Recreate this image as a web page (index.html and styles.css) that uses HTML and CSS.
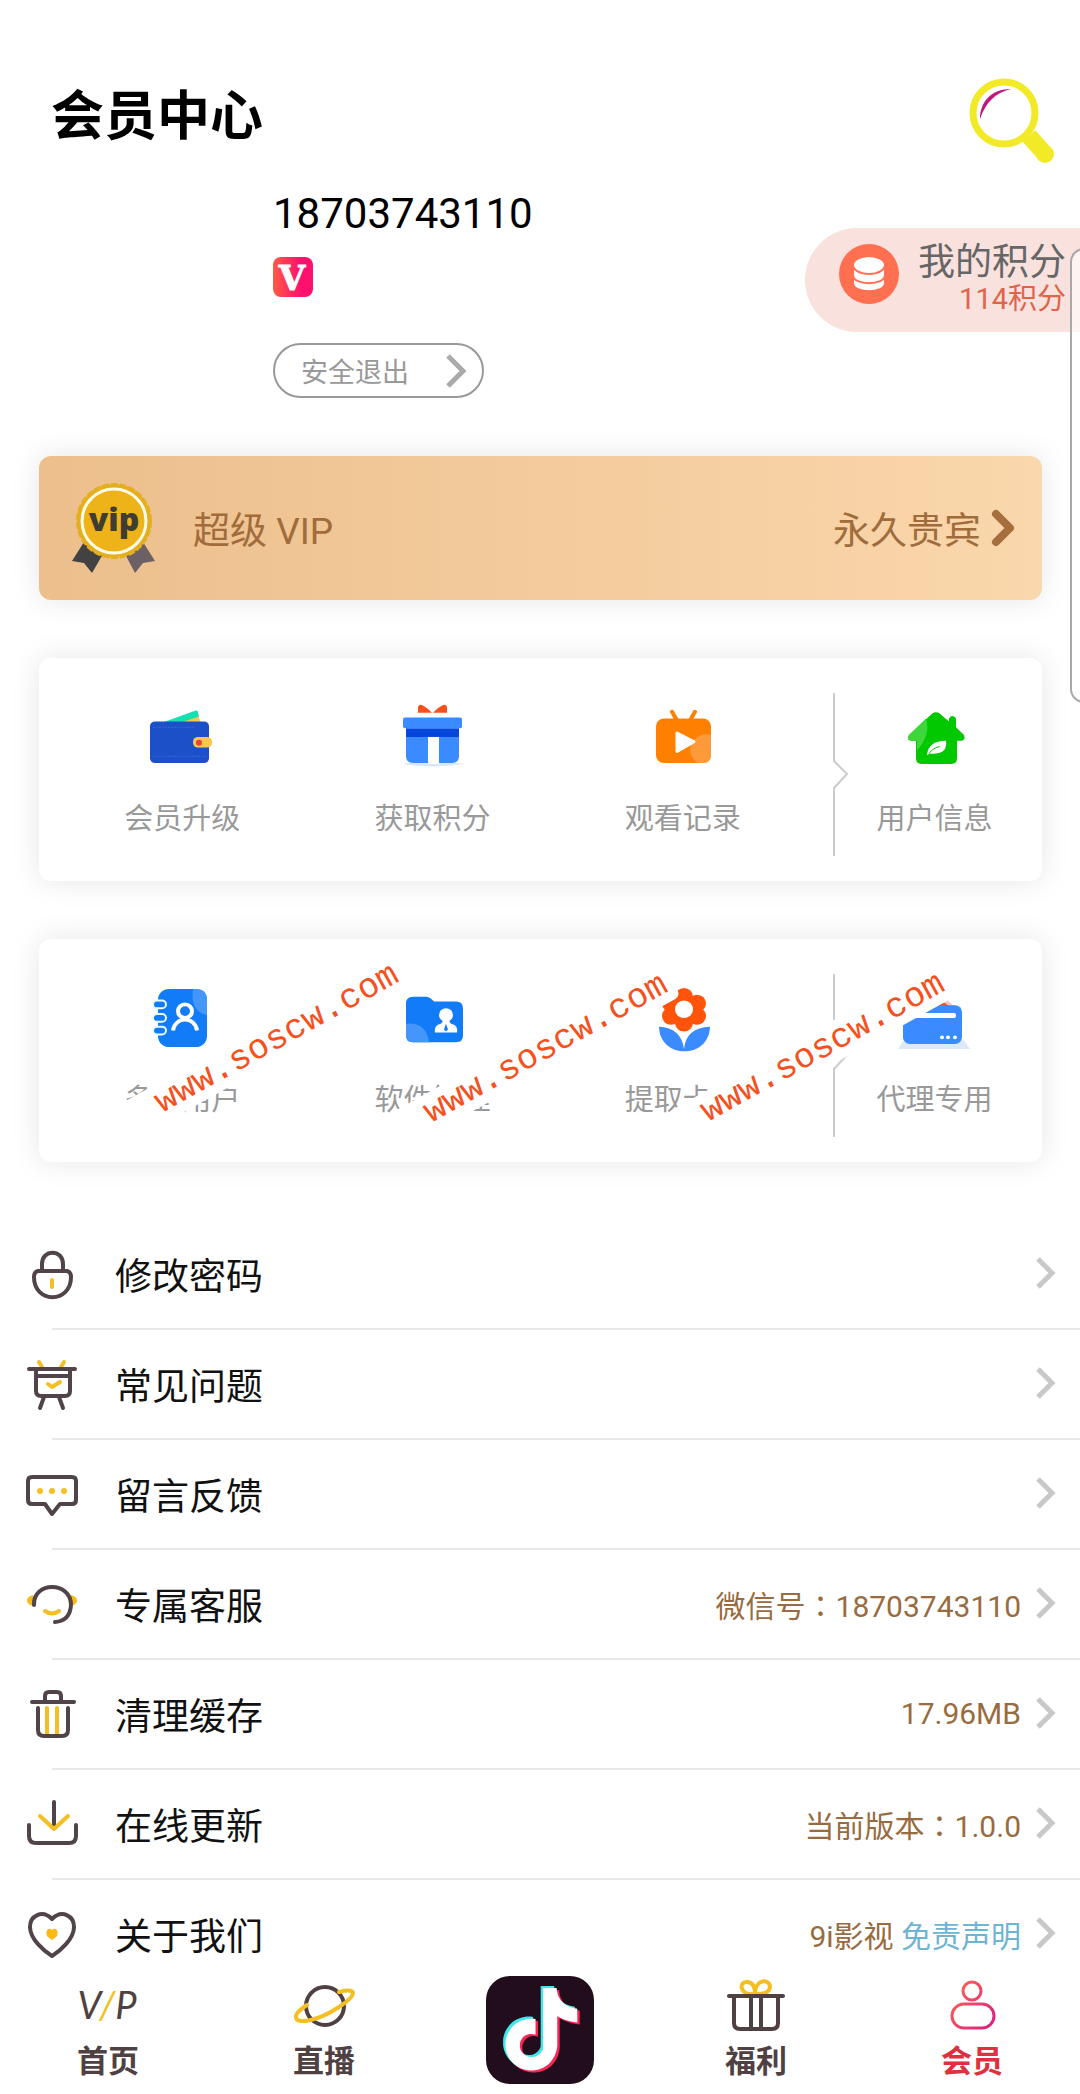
FILE: index.html
```html
<!DOCTYPE html>
<html lang="zh">
<head>
    <meta charset="UTF-8">
    <meta name="viewport" content="width=device-width, initial-scale=1.0">
    <title>会员中心</title>
    <link rel="stylesheet" href="styles.css">
</head>
<body>
    <div class="main-body">
        <div class="content">
            <header class="head-body">
                <h1>会员中心</h1>
                <button class="search-btn" type="button" aria-label="搜索">
                    <svg width="90" height="90" viewBox="0 0 90 90">
                        <path d="M66 64L83 83" stroke="#f2ea26" stroke-width="17" fill="none"/>
                        <circle cx="82" cy="82" r="9" fill="#f2ea26"/>
                        <circle cx="41" cy="41" r="31" stroke="#f2ea26" stroke-width="7" fill="#fff"/>
                        <path d="M17 47C17 30 28 17 48 17C32 21 23 30 17 47Z" fill="#c2187c"/>
                    </svg>
                </button>
            </header>

            <section class="profile">
                <div class="profile-info">
                    <div class="phone">18703743110</div>
                    <svg class="badge" width="40" height="40" viewBox="0 0 40 40">
                        <defs>
                            <linearGradient id="badgeBg"><stop offset="0" stop-color="#ff5a45"/><stop offset="0.7" stop-color="#ff0f6e"/></linearGradient>
                        </defs>
                        <rect width="40" height="40" rx="8" fill="url(#badgeBg)"/>
                        <text class="badge-text" x="19" y="33" text-anchor="middle">V</text>
                    </svg>
                    <button class="logout-btn" type="button">
                        <span>安全退出</span>
                        <svg width="20" height="34" viewBox="0 0 20 34"><path d="M2 2L17 17L2 32" stroke="#aaa" stroke-width="5" fill="none"/></svg>
                    </button>
                </div>
                <a class="points" href="#points">
                    <svg width="60" height="60" viewBox="0 0 60 60">
                        <circle cx="30" cy="30" r="30" fill="#ff7050"/>
                        <g fill="#fff" stroke="#ff7050" stroke-width="2">
                            <path d="M14 32V39C14 50 46 50 46 39V32Z"/>
                            <path d="M14 24V31C14 42 46 42 46 31V24Z"/>
                            <ellipse cx="30" cy="21" rx="16" ry="9"/>
                        </g>
                    </svg>
                    <div class="points-text">
                        <div class="points-title">我的积分</div>
                        <div class="points-num">114积分</div>
                    </div>
                </a>
            </section>

            <a class="vip-card" href="#vip">
                <svg width="84" height="90" viewBox="0 0 84 90">
                    <path d="M12 59L0 78L12 80L20 90L31 71Z" fill="#434242"/>
                    <path d="M71 59L83 78L71 80L63 90L53 71Z" fill="#6c6065"/>
                    <circle cx="42" cy="38" r="37" fill="#e3af1e"/>
                    <circle cx="42" cy="38" r="37" fill="none" stroke="#e3af1e" stroke-width="2" stroke-dasharray="7 2"/>
                    <circle cx="42" cy="38" r="32" fill="#efb31a" stroke="#fffbe6" stroke-width="3"/>
                    <text class="medal-text" x="42" y="48" text-anchor="middle">vip</text>
                </svg>
                <span class="vip-name">超级 VIP</span>
                <span class="vip-level">永久贵宾</span>
                <svg width="24" height="38" viewBox="0 0 24 38"><path d="M5 5L19 19L5 33" stroke="#a66d3d" stroke-width="8" stroke-linecap="round" stroke-linejoin="round" fill="none"/></svg>
            </a>

            <section class="tile-card">
                <a class="tile" href="#upgrade">
                    <svg class="tile-icon" viewBox="0 0 64 64" preserveAspectRatio="none">
                        <path d="M24 20L48 11L51 20Z" fill="#f8c74d"/>
                        <path d="M10 20L45 7Q48 6 48 9L49 13L28 20Z" fill="#16e0b0"/>
                        <rect y="18" width="59" height="43" rx="5" fill="#1c50c8"/>
                        <path d="M3 24H45M3 54H56" stroke="#3767d3" stroke-dasharray="2 1"/>
                        <rect x="43" y="34" width="19" height="11" rx="5" fill="#f8c74d"/>
                        <circle cx="49" cy="40" r="3" fill="#ee3f3a"/>
                    </svg>
                    <span>会员升级</span>
                </a>
                <a class="tile" href="#earn">
                    <svg class="tile-icon" viewBox="0 0 64 64" preserveAspectRatio="none">
                        <path d="M1 62Q32 57 64 62Q32 67 1 62Z" fill="#d6e8fb"/>
                        <path d="M18 9V3Q19 0 22 1Q28 4 32 9ZM47 9V3Q46 0 43 1Q37 4 33 9Z" fill="#f6501c"/>
                        <path d="M6 30H59V54Q59 61 52 61H13Q6 61 6 54Z" fill="#3a8bff"/>
                        <path d="M6 25H59V34H6Z" fill="#0546dc"/>
                        <rect x="3" y="14" width="59" height="11" rx="2" fill="#3a8bff"/>
                        <path d="M28 34H39V62H28Z" fill="#fff"/>
                    </svg>
                    <span>获取积分</span>
                </a>
                <a class="tile" href="#history">
                    <svg class="tile-icon" viewBox="0 0 64 64" preserveAspectRatio="none">
                        <path d="M21 8L26 17M44 8L39 17" stroke="#ff8000" stroke-width="4" stroke-linecap="round"/>
                        <rect x="5" y="15" width="55" height="46" rx="8" fill="#ff8000"/>
                        <path d="M60 32A16 16 0 0 0 47 61H52Q60 61 60 53Z" fill="#ff9a3a"/>
                        <path d="M26 30V49L43 39Z" fill="#fff" stroke="#fff" stroke-width="3" stroke-linejoin="round"/>
                    </svg>
                    <span>观看记录</span>
                </a>
                <svg class="tile-divider" width="35" height="163" viewBox="0 0 35 163"><path d="M26 0V68L39 81L26 95V163" stroke="#ccc" stroke-width="2" fill="none"/></svg>
                <a class="tile" href="#user">
                    <svg class="tile-icon" viewBox="0 0 64 64" preserveAspectRatio="none">
                        <path d="M30 10Q34 7 38 10L47 18V15Q50 10 54 15V24L62 32Q64 37 59 38H55V56Q55 62 49 62H20Q14 62 14 56V38H9Q4 37 7 32Z" fill="#02c800"/>
                        <path d="M24 15Q29 32 15 48V38H9Q4 37 7 32Z" fill="#3dd73c"/>
                        <path d="M25 53Q26 38 44 38Q46 53 28 51Z" fill="#fff"/>
                        <path d="M27 51Q31 45 38 44" stroke="#02c800" fill="none"/>
                    </svg>
                    <span>用户信息</span>
                </a>
            </section>

            <section class="tile-card">
                <a class="tile" href="#users">
                    <svg class="tile-icon" viewBox="0 0 64 64" preserveAspectRatio="none">
                        <rect x="8" y="4" width="49" height="60" rx="11" fill="#127cf8"/>
                        <path d="M43 4H46Q57 4 57 15V31Q40 27 43 4Z" fill="#4596fa"/>
                        <g fill="#127cf8" stroke="#eaffff" stroke-width="2">
                            <rect x="3" y="16" width="13" height="8" rx="4"/>
                            <rect x="3" y="30" width="13" height="8" rx="4"/>
                            <rect x="3" y="43" width="13" height="8" rx="4"/>
                        </g>
                        <g fill="none" stroke="#fff" stroke-width="4">
                            <circle cx="35" cy="27" r="7"/>
                            <path d="M23 47C25 32 45 32 47 47"/>
                        </g>
                    </svg>
                    <span>多级用户</span>
                </a>
                <a class="tile" href="#software">
                    <svg class="tile-icon" viewBox="0 0 64 64" preserveAspectRatio="none">
                        <path d="M6 19Q6 12 13 12H26Q30 12 34 17H56Q63 17 63 24V52Q63 59 56 59H13Q6 59 6 52Z" fill="#127cf8"/>
                        <path d="M6 40Q26 38 29 59H13Q6 59 6 52Z" fill="#4596fa"/>
                        <circle cx="46" cy="31" r="7" fill="#fff"/>
                        <path d="M43 35H49Q49 40 54 41Q58 43 57 49H35Q34 43 38 41Q43 40 43 35Z" fill="#fff"/>
                        <path d="M46 40L48 46L46 48L44 46Z" fill="#127cf8"/>
                    </svg>
                    <span>软件管理</span>
                </a>
                <a class="tile" href="#cards">
                    <svg class="tile-icon" viewBox="0 0 64 64" preserveAspectRatio="none">
                        <g fill="#ff540a">
                            <circle cx="33" cy="12" r="9"/><circle cx="46" cy="19" r="9"/><circle cx="46" cy="32" r="9"/>
                            <circle cx="33" cy="39" r="9"/><circle cx="20" cy="32" r="9"/><circle cx="20" cy="19" r="9"/>
                            <circle cx="33" cy="25" r="14"/>
                        </g>
                        <circle cx="33" cy="25" r="9" fill="#fff"/>
                        <path d="M8 43Q30 44 33 66Q35 44 59 43C58 77 9 77 8 43Z" fill="#3a8bff"/>
                    </svg>
                    <span>提取卡密</span>
                </a>
                <svg class="tile-divider" width="35" height="163" viewBox="0 0 35 163"><path d="M26 0V68L39 81L26 95V163" stroke="#ccc" stroke-width="2" fill="none"/></svg>
                <a class="tile" href="#agent">
                    <svg class="tile-icon" viewBox="0 0 64 64" preserveAspectRatio="none">
                        <path d="M2 57H62L68 66H-4Z" fill="#dce9fb"/>
                        <path d="M10 24L42 12L54 24Z" fill="#ffc4b8"/>
                        <path d="M20 24L38 15L50 24Z" fill="#f6501c"/>
                        <rect x="1" y="21" width="59" height="40" rx="7" fill="#3a8bff"/>
                        <rect x="6" y="29" width="48" height="5" rx="2" fill="#fff"/>
                        <g fill="#fff"><circle cx="40" cy="54" r="2"/><circle cx="46" cy="54" r="2"/><circle cx="53" cy="54" r="2"/></g>
                    </svg>
                    <span>代理专用</span>
                </a>
                <div class="stamp stamp-1">www.soscw.com</div>
                <div class="stamp stamp-2">www.soscw.com</div>
                <div class="stamp stamp-3">www.soscw.com</div>
            </section>

            <nav class="list-body">
                <a class="list-item" href="#password">
                    <svg class="list-icon" viewBox="0 0 50 50">
                        <path d="M15 21V14C15 -1 36 -1 36 14V21M11 21H40Q44 22 44 27C44 54 7 54 7 27Q7 22 11 21Z"/>
                        <path class="gold" d="M25 30V37"/>
                    </svg>
                    <div class="list-main"><span>修改密码</span><svg class="arrow" viewBox="0 0 20 32"><path d="M2 2L16 16L2 30"/></svg></div>
                </a>
                <a class="list-item" href="#faq">
                    <svg class="list-icon" viewBox="0 0 50 50">
                        <path class="gold" d="M12 2L15 7M37 2L34 7"/>
                        <path d="M2 9H48M9 9V31Q9 36 14 36H38Q43 36 43 31V9M9 16H43M17 37L13 48M32 37L36 48"/>
                        <path class="gold" d="M21 24L25 27L33 22"/>
                    </svg>
                    <div class="list-main"><span>常见问题</span><svg class="arrow" viewBox="0 0 20 32"><path d="M2 2L16 16L2 30"/></svg></div>
                </a>
                <a class="list-item" href="#feedback">
                    <svg class="list-icon" viewBox="0 0 50 50">
                        <path d="M5 7H45Q49 7 49 11V30Q49 34 45 34H33L25 44L18 34H5Q1 34 1 30V11Q1 7 5 7Z"/>
                        <path class="gold dots" d="M13 21V21M25 21V21M37 21V21"/>
                    </svg>
                    <div class="list-main"><span>留言反馈</span><svg class="arrow" viewBox="0 0 20 32"><path d="M2 2L16 16L2 30"/></svg></div>
                </a>
                <a class="list-item" href="#service">
                    <svg class="list-icon" viewBox="0 0 50 50">
                        <path class="gold-fill" d="M6 15C-2 17 -2 24 6 26ZM44 15C52 17 52 24 44 26Z"/>
                        <path d="M7 25C6 1 44 1 44 25Q43 41 28 42"/>
                        <path class="gold" d="M18 31Q25 36 32 31"/>
                    </svg>
                    <div class="list-main"><span>专属客服</span><span class="value">微信号<span class="colon" lang="zh-TW">：</span>18703743110</span><svg class="arrow" viewBox="0 0 20 32"><path d="M2 2L16 16L2 30"/></svg></div>
                </a>
                <a class="list-item" href="#cache">
                    <svg class="list-icon" viewBox="0 0 50 50">
                        <path class="gold" d="M20 18V45M30 18V45"/>
                        <path d="M5 12H47M18 11V6Q18 2 22 2H30Q34 2 34 6V11M11 18V40Q11 46 17 46H35Q41 46 41 40V18"/>
                    </svg>
                    <div class="list-main"><span>清理缓存</span><span class="value">17.96MB</span><svg class="arrow" viewBox="0 0 20 32"><path d="M2 2L16 16L2 30"/></svg></div>
                </a>
                <a class="list-item" href="#update">
                    <svg class="list-icon" viewBox="0 0 50 50">
                        <path d="M27 2V26M2 25V36Q2 43 9 43H42Q49 43 49 36V25"/>
                        <path class="gold" d="M13 16L27 29L41 16"/>
                    </svg>
                    <div class="list-main"><span>在线更新</span><span class="value">当前版本<span class="colon" lang="zh-TW">：</span>1.0.0</span><svg class="arrow" viewBox="0 0 20 32"><path d="M2 2L16 16L2 30"/></svg></div>
                </a>
                <a class="list-item" href="#about">
                    <svg class="list-icon" viewBox="0 0 50 50">
                        <path d="M25 9C15 -1 3 6 3 17C3 29 17 41 25 46C33 41 47 29 47 17C47 6 35 -1 25 9Z"/>
                        <path class="gold-fill" d="M25 20C21 16 17 23 21 27L25 30L29 27C33 23 29 16 25 20Z"/>
                    </svg>
                    <div class="list-main"><span>关于我们</span><span class="value">9i影视 <em>免责声明</em></span><svg class="arrow" viewBox="0 0 20 32"><path d="M2 2L16 16L2 30"/></svg></div>
                </a>
            </nav>
        </div>

        <nav class="tab-bar">
            <a class="tab" href="#home">
                <svg class="tab-icon" viewBox="0 0 60 60">
                    <text class="tab-vip" x="29" y="43" text-anchor="middle">V<tspan class="tab-vip-gold">/</tspan>P</text>
                </svg>
                <span>首页</span>
            </a>
            <a class="tab" href="#live">
                <svg class="tab-icon" viewBox="0 0 60 60">
                    <circle cx="31" cy="30" r="19"/>
                    <path class="gold" d="M45 16C65 11 62 20 45 31C24 45 2 49 2 41Q1 37 13 29"/>
                </svg>
                <span>直播</span>
            </a>
            <a class="tab tab-center" href="#video" aria-label="短视频">
                <svg width="108" height="108" viewBox="0 0 108 108">
                    <defs>
                        <path id="note" d="M12.5 0H16.4C16.5 1.6 17.1 3.1 18.2 4.2C19.3 5.3 20.9 5.8 22.4 6V10C21 9.9 19.5 9.6 18.2 9Q17.4 8.6 16.6 8.1V16.8C16.5 18.2 16 19.6 15.2 20.7C13.9 22.7 11.6 23.9 9.3 23.9C7.9 24 6.5 23.6 5.2 22.9C3.2 21.7 1.8 19.5 1.6 17.2V15.7C1.7 13.8 2.7 12 4.1 10.7C5.8 9.3 8.1 8.6 10.3 9V13.5C9.3 13.2 8.1 13.2 7.3 13.8C6.6 14.2 6.2 14.9 5.9 15.6C5.7 16.1 5.8 16.7 5.8 17.2C6 18.8 7.6 20.2 9.3 20C10.4 20 11.5 19.4 12.1 18.4Q12.4 18 12.5 17.4Z"/>
                    </defs>
                    <rect width="108" height="108" rx="24" fill="#210d1c"/>
                    <g transform="translate(14 12) scale(3.45)">
                        <use href="#note" x="0.7" y="0.6" fill="#fb2457"/>
                        <use href="#note" x="-0.7" y="-0.6" fill="#3fe6ea"/>
                        <use href="#note" fill="#fff"/>
                    </g>
                </svg>
            </a>
            <a class="tab" href="#welfare">
                <svg class="tab-icon" viewBox="0 0 60 60">
                    <path class="gold" d="M29 18C14 20 12 6 21 6Q29 6 29 18C29 2 44 3 44 11Q43 19 29 18"/>
                    <path d="M3 20H57M8 21V47Q8 53 14 53H46Q52 53 52 47V21M25 21V53M35 21V53"/>
                </svg>
                <span>福利</span>
            </a>
            <a class="tab active" href="#member">
                <svg class="tab-icon" viewBox="0 0 60 60">
                    <defs>
                        <linearGradient id="memberLine" gradientUnits="userSpaceOnUse" x1="8" y1="10" x2="52" y2="40"><stop offset="0" stop-color="#ff6a50"/><stop offset="1" stop-color="#e0257e"/></linearGradient>
                    </defs>
                    <g stroke="url(#memberLine)" stroke-width="3">
                        <circle cx="30" cy="15" r="9"/>
                        <rect x="10" y="28" width="42" height="24" rx="12"/>
                    </g>
                </svg>
                <span>会员</span>
            </a>
        </nav>
        <div class="edge-panel"></div>
    </div>
</body>
</html>
```
FILE: styles.css
```css
* {
    box-sizing: border-box;
}
body {
    margin: 0;
    background: #fff;
    font-family: Roboto, "Noto Sans CJK SC", sans-serif;
    font-weight: 400;
    color: #111;
}
a {
    color: inherit;
    text-decoration: none;
}
button {
    padding: 0;
    border: none;
    background: none;
    font-family: inherit;
    cursor: pointer;
}
svg {
    display: block;
    flex-shrink: 0;
    overflow: visible;
}
.main-body {
    position: relative;
    height: 100vh;
    display: flex;
    flex-direction: column;
    overflow: hidden;
}
.content {
    flex: 1;
    min-height: 0;
    overflow-x: hidden;
    overflow-y: auto;
    scrollbar-width: none;
}

/* 头部 */
.head-body {
    display: flex;
    align-items: center;
    justify-content: space-between;
    padding: 72px 27px 0 51px;
}
.head-body h1 {
    margin: 0;
    font-size: 53px;
    line-height: 80px;
    font-weight: 700;
    color: #000;
}
.profile {
    display: flex;
    align-items: flex-start;
    justify-content: space-between;
    padding: 27px 0 0 273px;
}
.phone {
    font-size: 42px;
    line-height: 50px;
    color: #000;
}
.badge {
    margin-top: 18px;
}
.badge-text {
    font: 700 34px "DejaVu Serif", serif;
    fill: #fff;
    stroke: #fff;
}
.logout-btn {
    display: flex;
    align-items: center;
    gap: 37px;
    height: 55px;
    margin-top: 46px;
    padding: 0 16px 0 26px;
    border: 2px solid #999;
    border-radius: 28px;
    font-size: 27px;
    color: #999;
}
.points {
    display: flex;
    gap: 19px;
    height: 104px;
    margin-top: 39px;
    padding: 15px 14px 0 34px;
    border-radius: 52px 0 0 52px;
    background: #f9e1dd;
    text-align: right;
}
.points svg {
    margin-top: 1px;
}
.points-title {
    font-size: 37px;
    line-height: 40px;
    color: #666;
}
.points-num {
    font-size: 29px;
    line-height: 32px;
    color: #e0644a;
}

/* 会员卡 */
.vip-card {
    display: flex;
    align-items: center;
    height: 144px;
    margin: 58px 38px 0 39px;
    padding: 0 27px 0 33px;
    border-radius: 12px;
    background: linear-gradient(90deg, #ecbf8c, #fad7ac);
    box-shadow: 0 0 30px rgba(0, 0, 0, 0.1);
    font-size: 37px;
    color: #a06c3c;
}
.medal-text {
    font: 800 32px "Open Sans", sans-serif;
    fill: #3f3c32;
}
.vip-name {
    margin-left: 37px;
}
.vip-level {
    margin: 0 10px 0 auto;
}

/* 功能卡片 */
.tile-card {
    position: relative;
    display: grid;
    grid-template-columns: 250fr 250fr 250fr 35px 183fr;
    margin: 58px 38px 0 39px;
    padding: 0 16px 0 18px;
    border-radius: 12px;
    background: #fff;
    box-shadow: 0 0 30px rgba(0, 0, 0, 0.1);
}
.tile {
    display: flex;
    flex-direction: column;
    align-items: center;
    gap: 33px;
    padding: 46px 0 42px;
    font-size: 29px;
    line-height: 40px;
    color: #999;
    white-space: nowrap;
}
.tile-icon {
    width: 64px;
    height: 62px;
}
.tile-divider {
    margin-top: 35px;
}
.stamp {
    position: absolute;
    width: 312px;
    height: 38px;
    padding-left: 32px;
    border-radius: 6px;
    background: #fff;
    font-family: "Liberation Mono", monospace;
    font-size: 35px;
    line-height: 38px;
    color: #f4511e;
    transform: rotate(-29deg);
}
.stamp-1 {
    left: 71px;
    top: 87px;
}
.stamp-2 {
    left: 340px;
    top: 97px;
}
.stamp-3 {
    left: 617px;
    top: 96px;
}

/* 列表 */
.list-body {
    margin-top: 58px;
}
.list-item {
    position: relative;
    display: flex;
    align-items: center;
    gap: 38px;
    height: 110px;
    padding-left: 27px;
    font-size: 37px;
}
.list-item::after {
    content: "";
    position: absolute;
    left: 52px;
    right: 0;
    bottom: 0;
    height: 2px;
    background: #e8e8e8;
}
.list-icon {
    width: 50px;
    height: 50px;
    fill: none;
    stroke: #51434a;
    stroke-width: 4;
    stroke-linecap: round;
    stroke-linejoin: round;
}
.gold {
    stroke: #f3bf22;
}
.dots {
    stroke-width: 6;
}
.gold-fill {
    fill: #fcb813;
    stroke: none;
}
.list-main {
    flex: 1;
    display: flex;
    align-items: center;
    padding: 0 24px 3px 0;
}
.value {
    margin-left: auto;
    font-size: 30px;
    color: #986b40;
}
.value em {
    font-style: normal;
    color: #6db5d3;
}
.colon {
    font-family: "Noto Sans CJK TC", sans-serif;
}
.arrow {
    width: 20px;
    height: 32px;
    margin-left: auto;
    margin-bottom: 2px;
    fill: none;
    stroke: #c8c8c8;
    stroke-width: 5;
}
.value + .arrow {
    margin-left: 15px;
}

/* 底部导航 */
.tab-bar {
    display: grid;
    grid-template-columns: repeat(5, 1fr);
    height: 129px;
    background: #fff;
}
.tab {
    display: flex;
    flex-direction: column;
    align-items: center;
    gap: 6px;
    padding-top: 11px;
    font-size: 31px;
    line-height: 40px;
    font-weight: 700;
    color: #4f4042;
}
.tab-icon {
    width: 60px;
    height: 60px;
    fill: none;
    stroke: #4f4042;
    stroke-width: 4;
    stroke-linecap: round;
    stroke-linejoin: round;
}
.tab-icon .gold {
    stroke: #f3bf22;
}
.tab-vip {
    font: italic 400 38px Lato, sans-serif;
    fill: #4f4042;
    stroke: none;
}
.tab-vip-gold {
    fill: #f3bf22;
}
.tab.active {
    color: #e0303f;
}

/* 右侧边栏把手 */
.edge-panel {
    position: absolute;
    top: 248px;
    right: -20px;
    width: 30px;
    height: 455px;
    border: 2px solid #a8a8a8;
    border-radius: 14px;
    background: rgba(255, 255, 255, 0.6);
}
```
